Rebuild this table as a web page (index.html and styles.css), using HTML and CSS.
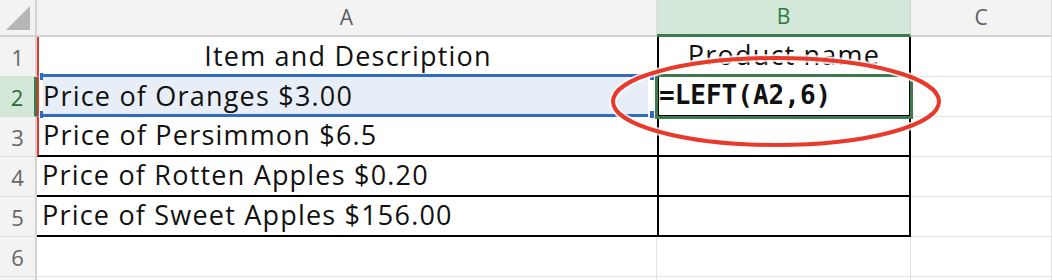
FILE: index.html
```html
<!DOCTYPE html>
<html lang="en">
<head>
  <meta charset="UTF-8" />
  <title>Book1 - Sheet1</title>
  <link rel="stylesheet" href="styles.css">
</head>
<body>
  <div class="sheet">
    <!-- header row -->
    <div class="corner">
      <svg width="37" height="37" viewBox="0 0 37 37"><polygon points="30,6 30,30 6,30" fill="#b6b6b6" /></svg>
    </div>
    <div class="col-head">A</div>
    <div class="col-head active">B</div>
    <div class="col-head">C</div>

    <!-- row 1 -->
    <div class="row-head">1</div>
    <div class="cell col-a edge center">Item and Description</div>
    <div class="cell col-b center">Product name</div>
    <div class="cell"></div>

    <!-- row 2 -->
    <div class="row-head active">2</div>
    <div class="cell col-a edge ref">Price of Oranges $3.00</div>
    <div class="cell col-b formula">=LEFT(A2,6)</div>
    <div class="cell"></div>

    <!-- row 3 -->
    <div class="row-head">3</div>
    <div class="cell col-a edge boxed">Price of Persimmon $6.5</div>
    <div class="cell col-b"></div>
    <div class="cell"></div>

    <!-- row 4 -->
    <div class="row-head">4</div>
    <div class="cell col-a boxed">Price of Rotten Apples $0.20</div>
    <div class="cell col-b"></div>
    <div class="cell"></div>

    <!-- row 5 -->
    <div class="row-head">5</div>
    <div class="cell col-a boxed">Price of Sweet Apples $156.00</div>
    <div class="cell col-b"></div>
    <div class="cell"></div>

    <!-- row 6 -->
    <div class="row-head">6</div>
    <div class="cell"></div>
    <div class="cell"></div>
    <div class="cell"></div>

    <!-- row 7 (cut off) -->
    <div class="row-head"></div>
    <div class="cell"></div>
    <div class="cell"></div>
    <div class="cell"></div>

    <!-- formula reference around A2 -->
    <div class="ref-box">
      <span class="handle tl"></span>
      <span class="handle bl"></span>
      <span class="handle tr"></span>
      <span class="handle br"></span>
    </div>

    <!-- active cell B2 -->
    <div class="active-box"></div>

    <!-- hand-drawn circle -->
    <svg class="mark" width="1052" height="280" viewBox="0 0 1052 280">
      <ellipse cx="776" cy="101.5" rx="163" ry="43.5" fill="none" stroke="#fff" stroke-width="8" stroke-opacity="0.8" />
      <ellipse cx="776" cy="101.5" rx="163" ry="43.5" fill="none" stroke="#e8392b" stroke-width="4" />
    </svg>
  </div>
</body>
</html>
```

FILE: styles.css
```css
html, body {
  margin: 0;
  background: #fff;
}

.sheet {
  position: relative;
  display: grid;
  grid-template-columns: 37px 620px 254px 141px;
  grid-template-rows: 37px repeat(6, 40px) 40px;
  width: 1052px;
  height: 280px;
  overflow: hidden;
  font-family: "Open Sans", "Noto Sans", sans-serif;
  color: #111;
}

.sheet > div {
  box-sizing: border-box;
}

/* headers */
.corner {
  background: #f3f3f3;
  border-right: 2px solid #d3d3d3;
  border-bottom: 2px solid #d3d3d3;
}
.corner svg {
  display: block;
}

.col-head {
  background: #f3f3f3;
  border-right: 1px solid #dcdcdc;
  border-bottom: 2px solid #d3d3d3;
  color: #5e5e5e;
  font-size: 21px;
  display: flex;
  align-items: center;
  justify-content: center;
  padding-bottom: 2px;
}
.col-head.active {
  background: #d3e8d9;
  color: #2e7a44;
  border-bottom: 3px solid #3e7a4d;
  border-right-color: #c2dcc8;
}

.row-head {
  background: #f3f3f3;
  border-right: 2px solid #d3d3d3;
  border-bottom: 1px solid #dcdcdc;
  color: #666;
  font-size: 22px;
  display: flex;
  align-items: center;
  justify-content: center;
}
.row-head.active {
  background: #d3e8d9;
  color: #2a6b3b;
  border-right: 3px solid #3e7a4d;
}

/* cells */
.cell {
  border-right: 1px solid #e2e2e2;
  border-bottom: 1px solid #e2e2e2;
  font-size: 27px;
  letter-spacing: 1.2px;
  line-height: 1;
  white-space: nowrap;
  overflow: hidden;
  display: flex;
  align-items: flex-end;
  padding: 0 0 7px 5px;
}
.cell.center {
  justify-content: center;
  padding-left: 0;
}

.col-a {
  border-right: none;
}
.col-a.edge {
  border-left: 2px solid #e3392c;
  padding-left: 4px;
}
.col-a.edge.center {
  padding-left: 0;
}
.col-a.boxed {
  border-bottom: 2px solid #000;
}

.col-b {
  border-left: 2px solid #000;
  border-right: 2px solid #000;
  border-bottom: 2px solid #000;
}

.ref {
  background: linear-gradient(to right, #fff 4px, #e8eef7 4px, #e8eef7 calc(100% - 9px), #fff calc(100% - 9px));
}

.formula {
  font-family: "DejaVu Sans Mono", monospace;
  font-weight: bold;
  font-size: 26px;
  letter-spacing: 0;
  padding-left: 0;
  padding-bottom: 7px;
}

/* formula reference outline */
.ref-box {
  position: absolute;
  left: 43px;
  top: 74px;
  width: 605px;
  height: 43px;
  border-top: 3px solid #2f6cbf;
  border-bottom: 3px solid #2f6cbf;
}
.handle {
  position: absolute;
  background: #2f6cbf;
}
.handle.tl, .handle.bl {
  left: -3px;
  width: 3px;
  height: 7px;
}
.handle.tr, .handle.br {
  right: -6px;
  width: 4px;
  height: 7px;
}
.handle.tl, .handle.tr {
  top: -4px;
}
.handle.bl, .handle.br {
  bottom: -4px;
}

/* selected cell */
.active-box {
  position: absolute;
  left: 655px;
  top: 74px;
  width: 258px;
  height: 45px;
  border: 3px solid #3e7a4d;
  box-sizing: border-box;
}

.mark {
  position: absolute;
  left: 0;
  top: 0;
  pointer-events: none;
}
```
